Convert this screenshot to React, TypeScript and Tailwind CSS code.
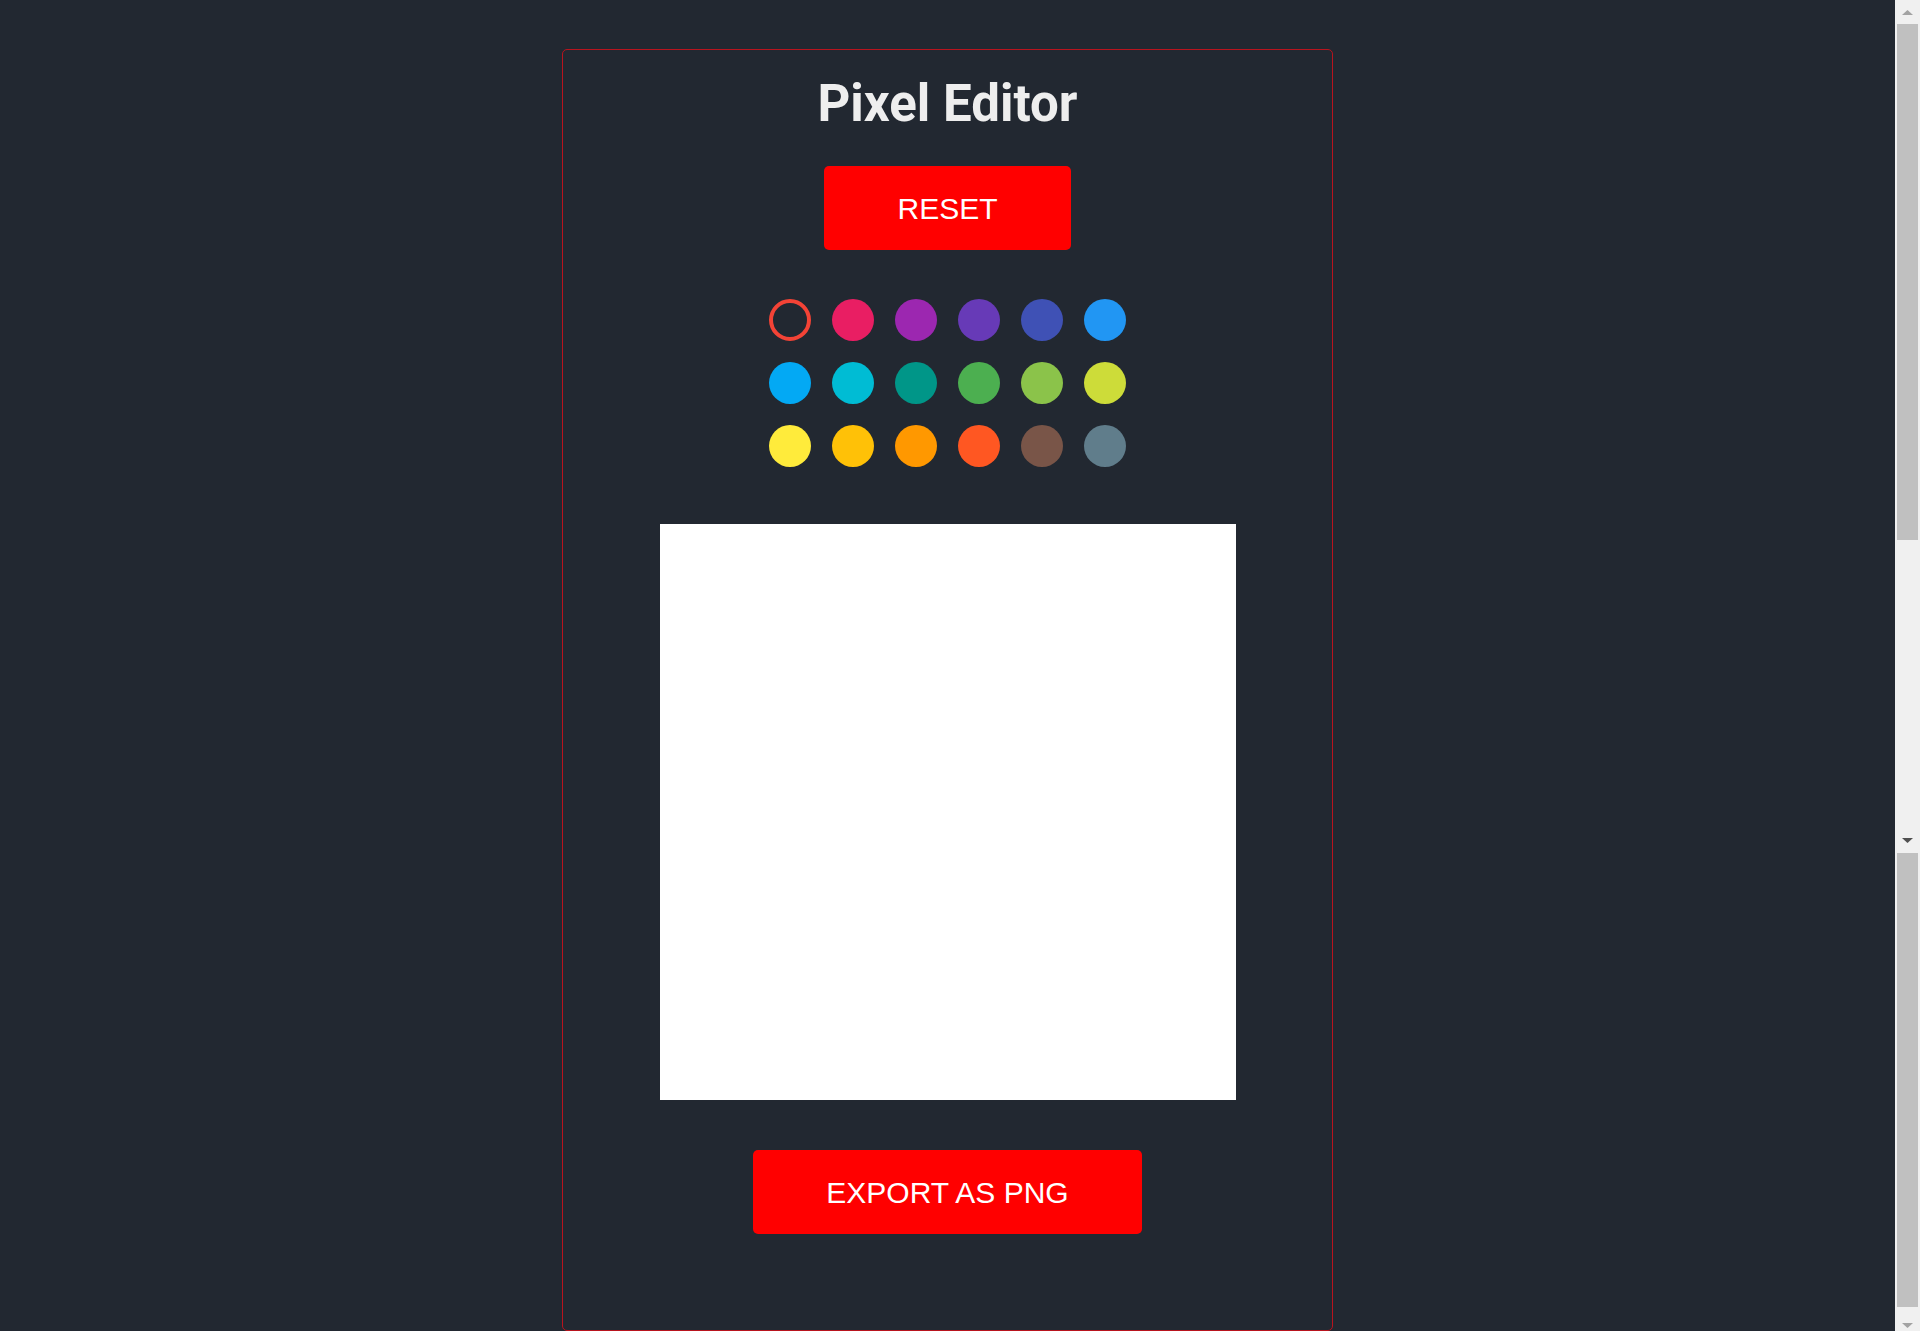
import React from 'react';

const COLORS = [
  '#f44336', '#e91e63', '#9c27b0', '#673ab7', '#3f51b5', '#2196f3',
  '#03a9f4', '#00bcd4', '#009688', '#4caf50', '#8bc34a', '#cddc39',
  '#ffeb3b', '#ffc107', '#ff9800', '#ff5722', '#795548', '#607d8b',
];

function Arrow({ up, color }: { up?: boolean; color: string }) {
  return (
    <svg width="11" height="5" viewBox="0 0 11 5" className="block">
      <polygon points={up ? '5.5,0 11,5 0,5' : '0,0 11,0 5.5,5'} fill={color} />
    </svg>
  );
}

function Scrollbar() {
  return (
    <div className="flex w-[25px] shrink-0 flex-col items-center bg-[#f0f0f0]">
      <div className="h-[24px] pt-[10px]">
        <Arrow up color="#a3a3a3" />
      </div>
      <div className="h-[516px] w-[21px] bg-[#c0c0c0]" />
      <div className="h-[298px]" />
      <Arrow color="#505050" />
      <div className="h-[10px]" />
      <div className="h-[454px] w-[21px] bg-[#c0c0c0]" />
      <div className="h-[16px]" />
      <Arrow color="#a3a3a3" />
    </div>
  );
}

export default function App() {
  const selected = 0;

  return (
    <div className="flex h-[1331px] w-full overflow-hidden bg-[#222831]">
      <main className="flex flex-1 justify-center pt-[49px]">
        <div className="flex h-[1282px] w-[771px] flex-col items-center rounded-[5px] border border-[#b8141e] pt-[28px]">
          <h1 className="text-[51px] font-bold leading-none text-[#eeeeee] [font-family:Roboto,'Liberation_Sans',sans-serif]">
            Pixel Editor
          </h1>

          <button className="mt-[37px] flex h-[84px] items-center justify-center rounded-[5px] bg-[#ff0000] px-[73px] text-[30px] text-white [font-family:'Liberation_Sans',Arial,sans-serif]">
            RESET
          </button>

          <div className="mt-[49px] grid grid-cols-6 gap-[21px]">
            {COLORS.map((c, i) => (
              <div
                key={c}
                className="h-[42px] w-[42px] rounded-full"
                style={i === selected ? { border: `4px solid ${c}` } : { backgroundColor: c }}
              />
            ))}
          </div>

          <div className="mt-[57px] h-[576px] w-[576px] bg-white" />

          <button className="mt-[50px] flex h-[84px] items-center justify-center rounded-[5px] bg-[#ff0000] px-[73px] text-[30px] text-white [font-family:'Liberation_Sans',Arial,sans-serif]">
            EXPORT AS PNG
          </button>
        </div>
      </main>
      <Scrollbar />
    </div>
  );
}
